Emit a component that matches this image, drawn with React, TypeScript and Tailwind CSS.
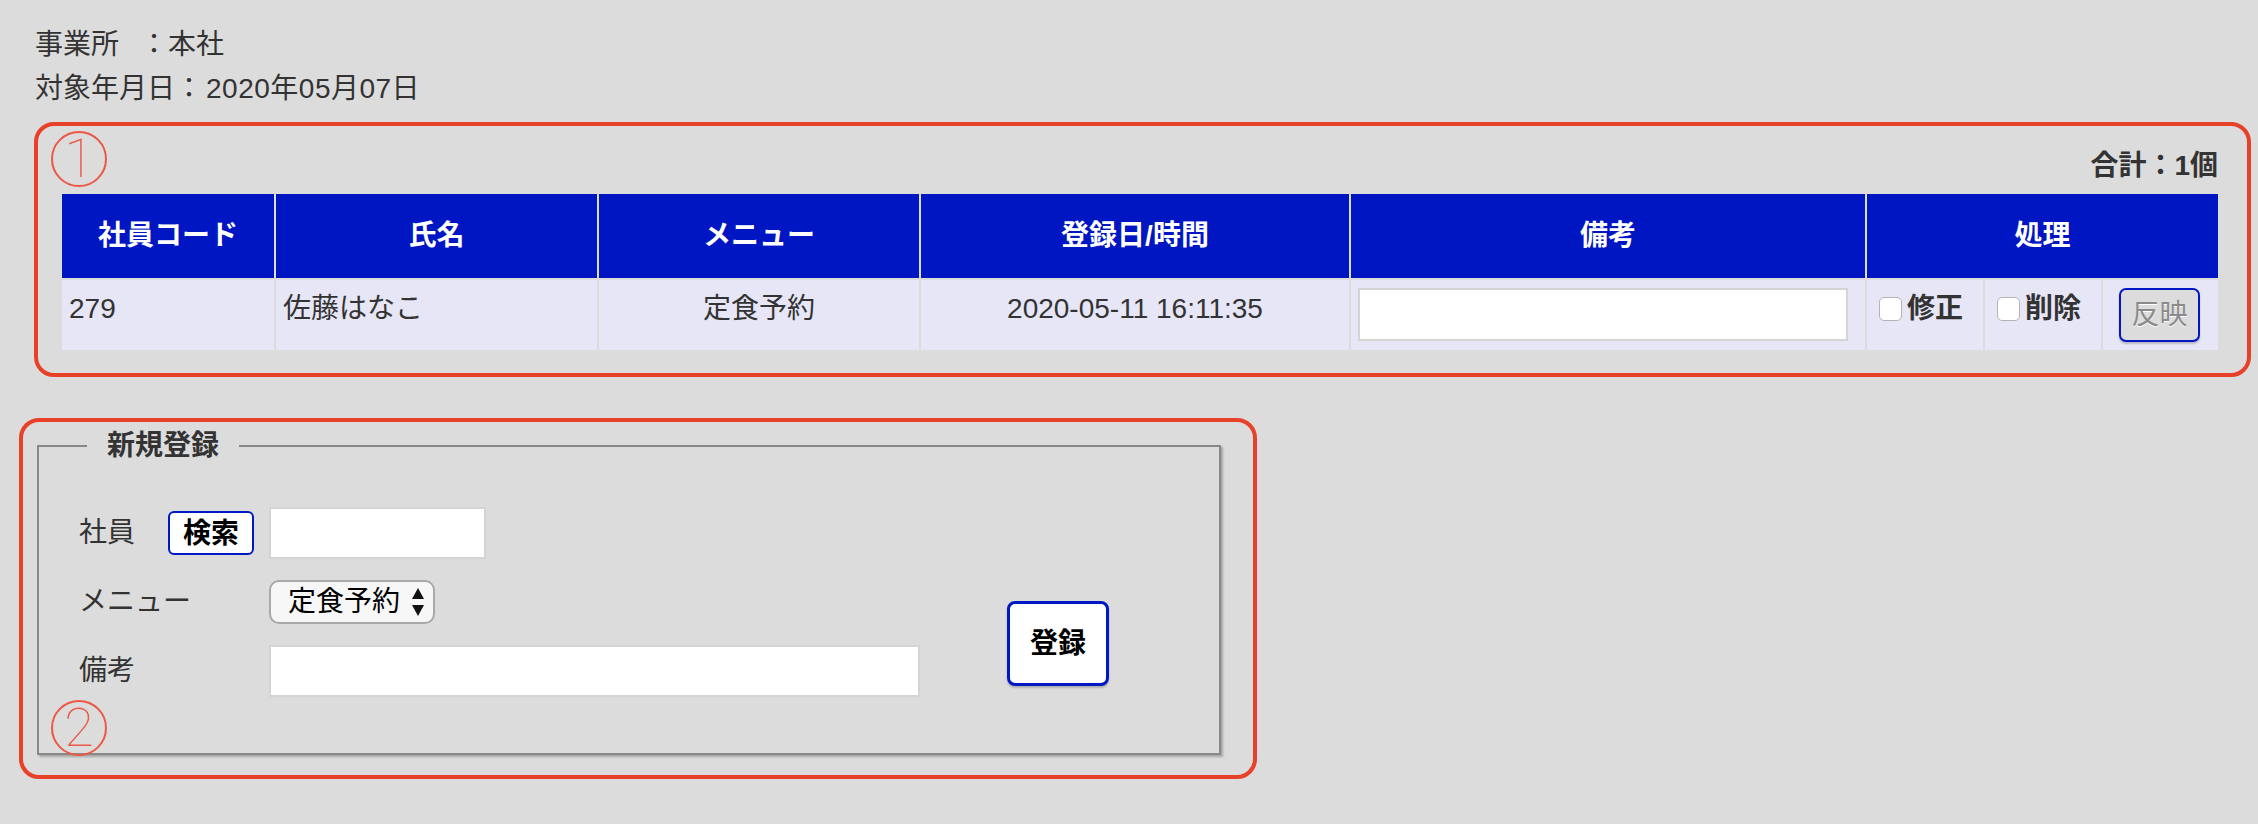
import React from "react";

const font = "font-['Liberation_Sans','Noto_Sans_CJK_JP',sans-serif]";

const columns = [
  { title: "社員コード", width: "w-[212px]" },
  { title: "氏名", width: "w-[321px]" },
  { title: "メニュー", width: "w-[320px]" },
  { title: "登録日/時間", width: "w-[428px]" },
  { title: "備考", width: "w-[514px]" },
];

function Mark({ n, pos }: { n: string; pos: string }) {
  return (
    <div
      className={`absolute ${pos} w-[56px] h-[56px] rounded-full border-2 border-[#ec5846] flex items-center justify-center`}
    >
      <span className="font-['Roboto',sans-serif] font-thin text-[54px] leading-none text-[#ec5846]">
        {n}
      </span>
    </div>
  );
}

function Check({ label }: { label: string }) {
  return (
    <div className="flex items-center pl-[12px] gap-[5px]">
      <input
        type="checkbox"
        className="appearance-none w-[23px] h-[24px] rounded-[5px] border border-[#b3b3b3] bg-white"
      />
      <span className="font-bold text-[#333]">{label}</span>
    </div>
  );
}

export default function App() {
  return (
    <div className={`${font} min-h-[824px] w-full bg-[#dcdcdc] text-[28px] text-[#333] pb-[40px]`}>
      {/* header info */}
      <div className="pt-[23px] pl-[35px] leading-[44px]">
        <div>
          事業所<span className="inline-block w-[21px]" />：本社
        </div>
        <div>
          対象年月日：<span className="ml-[3px] tracking-[0.5px]">2020年05月07日</span>
        </div>
      </div>

      {/* ① list */}
      <div className="relative ml-[34px] mt-[11px] w-[2217px] border-4 border-[#e8412a] rounded-[20px] pl-[22px] pt-[20px] pb-[21px]">
        <Mark n="1" pos="left-[13px] top-[5px]" />
        <div className="w-[2160px] pr-[2px] text-right font-bold leading-[40px]">合計：1個</div>
        <table className="mt-[6px] w-[2160px] table-fixed border-separate border-spacing-[2px]">
          <colgroup>
            {columns.map((c) => (
              <col key={c.title} className={c.width} />
            ))}
            <col className="w-[116px]" />
            <col className="w-[116px]" />
            <col className="w-[115px]" />
          </colgroup>
          <thead>
            <tr>
              {columns.map((c) => (
                <th key={c.title} className="h-[84px] bg-[#0016c3] text-white font-bold align-middle">
                  {c.title}
                </th>
              ))}
              <th colSpan={3} className="h-[84px] bg-[#0016c3] text-white font-bold align-middle">
                処理
              </th>
            </tr>
          </thead>
          <tbody>
            <tr className="bg-[#e6e6f7] leading-[36px]">
              <td className="h-[70px] align-top pt-[11px] px-[7px]">279</td>
              <td className="align-top pt-[11px] px-[7px]">佐藤はなこ</td>
              <td className="align-top pt-[11px] text-center">定食予約</td>
              <td className="align-top pt-[11px] text-center">2020-05-11 16:11:35</td>
              <td className="align-top pt-[8px] pl-[7px]">
                <input type="text" className="block w-[490px] h-[53px] bg-white border-2 border-[#d4d4d4]" />
              </td>
              <td className="align-top pt-[11px]">
                <Check label="修正" />
              </td>
              <td className="align-top pt-[11px]">
                <Check label="削除" />
              </td>
              <td className="align-top pt-[8px] pl-[16px]">
                <button
                  disabled
                  className="w-[81px] h-[54px] rounded-[7px] border-2 border-[#0018c4] bg-[#dcdcdc] text-[#8a8a8a] shadow-[0_2px_2px_rgba(0,0,0,0.2)] [text-shadow:0_1px_0_#fff]"
                >
                  反映
                </button>
              </td>
            </tr>
          </tbody>
        </table>
      </div>

      {/* ② new entry */}
      <div className="relative ml-[19px] mt-[41px] w-[1238px] border-4 border-[#e8412a] rounded-[20px] pt-[4px] pl-[14px] pb-[20px]">
        <fieldset className="w-[1184px] border-2 border-[#888] shadow-[2px_2px_2px_rgba(0,0,0,0.25)] pl-[40px] pt-[41px] pb-[56px]">
          <legend className="ml-[8px] px-[20px] font-bold leading-[40px]">新規登録</legend>
          <div className="flex items-start">
            <div className="flex flex-col gap-[21px]">
              <div className="flex items-center h-[52px]">
                <span className="w-[89px]">社員</span>
                <button className="w-[86px] h-[44px] rounded-[6px] border-2 border-[#0018c4] bg-white font-bold text-black">
                  検索
                </button>
                <input type="text" className="ml-[15px] w-[217px] h-[52px] bg-white border-2 border-[#d4d4d4]" />
              </div>
              <div className="flex items-center h-[44px]">
                <span className="w-[190px]">メニュー</span>
                <div className="flex items-center gap-[12px] w-[166px] h-[44px] rounded-[10px] border-2 border-[#a9a9a9] bg-[#f7f7f7] pl-[17px] text-black">
                  <span>定食予約</span>
                  <svg width="12" height="28" viewBox="0 0 12 28">
                    <path d="M6 0 L12 11 L0 11 Z" fill="#111" />
                    <path d="M0 17 L12 17 L6 28 Z" fill="#111" />
                  </svg>
                </div>
              </div>
              <div className="flex items-center h-[52px]">
                <span className="w-[190px]">備考</span>
                <input type="text" className="w-[651px] h-[52px] bg-white border-2 border-[#d4d4d4]" />
              </div>
            </div>
            <button className="ml-[87px] mt-[94px] w-[102px] h-[85px] rounded-[8px] border-[3px] border-[#0018c4] bg-white font-bold text-black shadow-[0_2px_2px_rgba(0,0,0,0.2)]">
              登録
            </button>
          </div>
        </fieldset>
        <Mark n="2" pos="left-[28px] top-[278px]" />
      </div>
    </div>
  );
}
